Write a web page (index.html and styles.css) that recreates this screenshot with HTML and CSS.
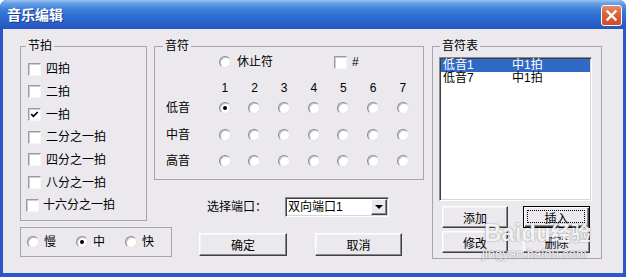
FILE: index.html
```html
<!DOCTYPE html>
<html lang="zh-CN">

<head>
  <meta charset="UTF-8">
  <meta name="viewport" content="width=device-width, initial-scale=1.0">
  <title>音乐编辑</title>
  <link rel="stylesheet" href="styles.css">
</head>

<body>
  <div class="window">
    <div class="titlebar">
      <span class="title">音乐编辑</span>
      <div class="close">
        <svg width="19" height="19" viewBox="0 0 19 19">
          <path d="M5.5 5.5 L13.5 13.5 M13.5 5.5 L5.5 13.5" stroke="#fff" stroke-width="2.4" stroke-linecap="square" fill="none" />
        </svg>
      </div>
    </div>

    <div class="dialog">
      <fieldset class="group beat">
        <legend>节拍</legend>
        <div class="beat-body">
          <div class="check-row"><span class="check"></span>四拍</div>
          <div class="check-row"><span class="check"></span>二拍</div>
          <div class="check-row">
            <span class="check">
              <svg width="9" height="9" viewBox="0 0 9 9">
                <path d="M1.2 4.2 L3.4 6.4 L7.8 2" stroke="#000" stroke-width="1.7" fill="none" />
              </svg>
            </span>一拍
          </div>
          <div class="check-row"><span class="check"></span>二分之一拍</div>
          <div class="check-row"><span class="check"></span>四分之一拍</div>
          <div class="check-row"><span class="check"></span>八分之一拍</div>
          <div class="check-row shift"><span class="check"></span>十六分之一拍</div>
        </div>
      </fieldset>

      <fieldset class="group notes">
        <legend>音符</legend>
        <div class="notes-body">
          <div class="rest-row">
            <span class="radio"></span>
            <span class="rest-label">休止符</span>
            <span class="check sharp"></span>
            <span>#</span>
          </div>
          <div class="matrix">
            <span></span>
            <span>1</span><span>2</span><span>3</span><span>4</span><span>5</span><span>6</span><span>7</span>

            <span class="row-label">低音</span>
            <span class="radio on"></span><span class="radio"></span><span class="radio"></span><span class="radio"></span>
            <span class="radio"></span><span class="radio"></span><span class="radio"></span>

            <span class="row-label">中音</span>
            <span class="radio"></span><span class="radio"></span><span class="radio"></span><span class="radio"></span>
            <span class="radio"></span><span class="radio"></span><span class="radio"></span>

            <span class="row-label">高音</span>
            <span class="radio"></span><span class="radio"></span><span class="radio"></span><span class="radio"></span>
            <span class="radio"></span><span class="radio"></span><span class="radio"></span>
          </div>
        </div>
      </fieldset>

      <div class="port">
        <span class="port-label">选择端口：</span>
        <div class="select">
          <span>双向端口1</span>
          <span class="select-arrow"></span>
        </div>
      </div>

      <fieldset class="group speed">
        <span class="radio"></span><span class="speed-label">慢</span>
        <span class="radio on"></span><span class="speed-label">中</span>
        <span class="radio"></span><span class="speed-label">快</span>
      </fieldset>

      <div class="actions">
        <button class="btn ok">确定</button>
        <button class="btn cancel">取消</button>
      </div>

      <fieldset class="group notelist">
        <legend>音符表</legend>
        <div class="notelist-body">
          <div class="listbox">
            <div class="list-row selected"><span class="list-name">低音1</span><span>中1拍</span></div>
            <div class="list-row"><span class="list-name">低音7</span><span>中1拍</span></div>
          </div>
          <div class="list-actions">
            <button class="btn">添加</button>
            <button class="btn default">插入</button>
            <button class="btn">修改</button>
            <button class="btn">删除</button>
          </div>
        </div>
      </fieldset>
    </div>

    <div class="watermark">
      <div class="wm-logo">Baidu<span>经验</span></div>
      <div class="wm-url">jingyan.baidu.com</div>
    </div>
  </div>
</body>

</html>
```

FILE: styles.css
```css
html,
body {
  margin: 0;
  padding: 0;
  background: #fff;
}

* {
  box-sizing: border-box;
}

.window {
  position: relative;
  width: 626px;
  height: 277px;
  background: #2a58c6;
  border-radius: 7px 7px 0 0;
  overflow: hidden;
  font-family: "Liberation Sans", "Noto Sans CJK SC", sans-serif;
  font-size: 12px;
  color: #000;
}

/* title bar */
.titlebar {
  display: flex;
  justify-content: space-between;
  height: 29px;
  padding: 0 4px 0 7px;
  background: linear-gradient(to bottom, #9cc4f2 0, #6aa2e8 3px, #3f80da 9px, #2f6ed2 16px, #2a61c8 23px, #2556bf 29px);
}

.title {
  line-height: 29px;
  font-size: 14px;
  font-weight: bold;
  color: #fff;
  text-shadow: 1px 1px 0 #1b3c94;
  font-family: "Noto Sans CJK SC", sans-serif;
}

.close {
  display: flex;
  align-items: center;
  justify-content: center;
  width: 21px;
  height: 21px;
  margin-top: 5px;
  border: 1px solid #fff;
  border-radius: 3px;
  background: linear-gradient(to bottom, #e98a66 0, #dc6440 40%, #cd4b2a 100%);
}

/* dialog body */
.dialog {
  display: grid;
  grid-template-columns: 127px 270px 171px;
  grid-template-rows: 141px 47px auto;
  column-gap: 7px;
  align-items: start;
  height: 244px;
  margin: 0 3px;
  padding: 10px 0 0 17px;
  background: #ebe9ed;
}

.group {
  margin: 0;
  padding: 0;
  min-width: 0;
  border: 1px solid #a6a5aa;
}

.group legend {
  padding: 0 2px;
  line-height: 14px;
  font-size: 12px;
}

/* check boxes and radios */
.check {
  display: inline-flex;
  align-items: center;
  justify-content: center;
  flex-shrink: 0;
  width: 13px;
  height: 13px;
  background: #fff;
  border: 1px solid;
  border-color: #9b9a9f #f6f6f6 #f6f6f6 #9b9a9f;
  box-shadow: inset 1px 1px 0 #cfcdd2;
}

.radio {
  display: inline-flex;
  align-items: center;
  justify-content: center;
  flex-shrink: 0;
  width: 12px;
  height: 12px;
  border-radius: 50%;
  background: #fff;
  border: 1px solid;
  border-color: #8c8b90 #e4e3e7 #e4e3e7 #8c8b90;
  box-shadow: inset 1px 1px 0 #c4c3c8;
}

.radio.on::after {
  content: '';
  width: 4px;
  height: 4px;
  border-radius: 50%;
  background: #000;
}

/* 节拍 */
.beat {
  grid-column: 1;
  grid-row: 1 / 3;
  height: 182px;
}

.beat legend {
  margin-left: 5px;
}

.beat-body {
  padding: 5px 0 0 7px;
}

.check-row {
  display: flex;
  align-items: center;
  gap: 5px;
  height: 22.67px;
  line-height: 14px;
}

.check-row.shift {
  margin-left: -2px;
  gap: 4px;
}

/* 音符 */
.notes {
  grid-column: 2;
  grid-row: 1;
  height: 141px;
}

.notes legend {
  margin-left: 8px;
}

.notes-body {
  padding-left: 11px;
}

.rest-row {
  display: flex;
  align-items: center;
  height: 18px;
  padding-left: 53px;
  line-height: 14px;
}

.rest-label {
  margin-left: 6px;
  width: 36px;
}

.check.sharp {
  margin: 0 5px 0 61px;
}

.matrix {
  display: grid;
  grid-template-columns: 44px repeat(7, 29.67px);
  grid-template-rows: 14px repeat(3, 26.5px);
  align-items: center;
  justify-items: center;
  margin-top: 10px;
  line-height: 14px;
}

.matrix .row-label {
  justify-self: start;
}

/* 端口 */
.port {
  grid-column: 2;
  grid-row: 2;
  display: flex;
  align-items: center;
  margin-top: 17px;
  padding-left: 53px;
  line-height: 14px;
}

.port-label {
  width: 60px;
  margin-right: 18px;
}

.select {
  display: flex;
  align-items: center;
  width: 104px;
  height: 20px;
  padding: 0 1px 0 2px;
  background: #fff;
  border: 1px solid;
  border-color: #8a898e #fff #fff #8a898e;
  box-shadow: inset 1px 1px 0 #3f3f3f, inset -1px -1px 0 #d8d6da;
}

.select-arrow {
  display: flex;
  align-items: center;
  justify-content: center;
  width: 16px;
  height: 16px;
  margin-left: auto;
  background: #ebe9ed;
  border: 1px solid;
  border-color: #fff #404040 #404040 #fff;
  box-shadow: inset -1px -1px 0 #8a898e;
}

.select-arrow::after {
  content: '';
  border-left: 4px solid transparent;
  border-right: 4px solid transparent;
  border-top: 4px solid #000;
}

/* 速度 */
.speed {
  grid-column: 1;
  grid-row: 3;
  display: flex;
  align-items: center;
  width: 152px;
  height: 30px;
  padding-left: 6px;
  line-height: 14px;
}

.speed-label {
  margin: 0 20px 0 5px;
}

/* buttons */
.btn {
  height: 23px;
  padding: 0;
  font: inherit;
  font-size: 12px;
  color: #000;
  background: #ebe9ed;
  border: 1px solid;
  border-color: #fff #404040 #404040 #fff;
  box-shadow: inset -1px -1px 0 #8a898e, inset 1px 1px 0 #f4f3f5;
}

.actions {
  grid-column: 2;
  grid-row: 3;
  display: flex;
  margin-top: 6px;
  padding-left: 45px;
}

.actions .ok {
  width: 88px;
}

.actions .cancel {
  width: 87px;
  margin-left: 28px;
}

/* 音符表 */
.notelist {
  grid-column: 3;
  grid-row: 1 / 4;
  justify-self: end;
  width: 170px;
  height: 220px;
}

.notelist legend {
  margin-left: 7px;
}

.notelist-body {
  padding: 4px 0 0 6px;
}

.listbox {
  width: 153px;
  height: 144px;
  padding: 1px;
  background: #fff;
  border: 1px solid;
  border-color: #8a898e #fff #fff #8a898e;
  box-shadow: inset 1px 1px 0 #3f3f3f, inset -1px -1px 0 #d8d6da;
}

.list-row {
  display: flex;
  height: 13px;
  line-height: 13px;
  padding-left: 2px;
}

.list-row.selected {
  background: #316ac5;
  color: #fff;
}

.list-name {
  width: 69px;
}

.list-actions {
  display: grid;
  grid-template-columns: 66px 67px;
  column-gap: 15px;
  row-gap: 3px;
  margin: 5px 0 0 3px;
}

.list-actions .btn {
  height: 22px;
}

.btn.default {
  position: relative;
  border-color: #000;
  box-shadow: inset 1px 1px 0 #fff, inset -1px -1px 0 #404040, inset -2px -2px 0 #8a898e;
}

.btn.default::after {
  content: '';
  position: absolute;
  top: 3px;
  left: 3px;
  right: 4px;
  bottom: 4px;
  border: 1px dotted #000;
}

/* watermark over the lower right */
.watermark {
  position: absolute;
  left: 484px;
  top: 219px;
  color: rgba(255, 255, 255, 0.92);
  text-shadow: 0 0 1px rgba(90, 90, 100, 0.7), 0 0 2px rgba(120, 120, 130, 0.4);
  pointer-events: none;
}

.wm-logo {
  font-size: 24px;
  line-height: 28px;
  font-weight: bold;
}

.wm-logo span {
  font-size: 20px;
  font-family: "Noto Sans CJK SC", sans-serif;
}

.wm-url {
  font-size: 13px;
  line-height: 14px;
  margin-left: -2px;
}
```
